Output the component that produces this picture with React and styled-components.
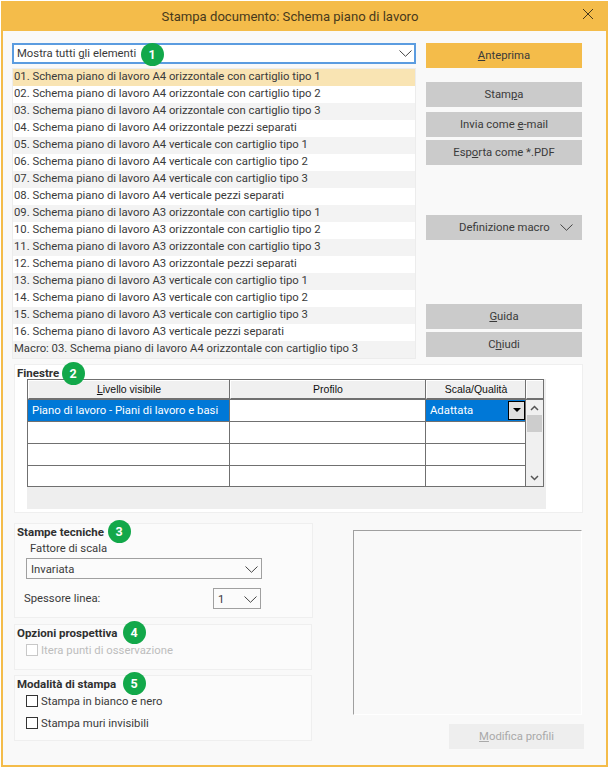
import React from 'react';
import styled, { createGlobalStyle } from 'styled-components';

const GlobalStyle = createGlobalStyle`
  html, body {
    margin: 0;
    padding: 0;
    background: #ffffff;
  }
  * {
    box-sizing: border-box;
  }
`;

const UI_FONT = `Roboto, "Liberation Sans", sans-serif`;

const Win = styled.div`
  position: relative;
  width: 607px;
  height: 766px;
  margin: 1px 0 0 1px;
  border: 2px solid #f4bc4a;
  border-top: 0;
  background: #f9f9f9;
  font-family: ${UI_FONT};
  font-size: 11.3px;
  color: #3a3a3a;
  overflow: hidden;
`;

const TitleBar = styled.div`
  display: flex;
  align-items: center;
  justify-content: center;
  position: relative;
  height: 30px;
  margin: 0 -2px;
  padding-right: 29px;
  background: #f4bc4a;
  font-size: 13.1px;
  color: #47391c;
`;

const CloseButton = styled.svg`
  position: absolute;
  right: 15px;
  top: 8px;
  width: 10px;
  height: 10px;
`;

const Top = styled.div`
  display: flex;
  gap: 10px;
  padding: 12px 0 0 9px;
`;

const LeftCol = styled.div`
  display: flex;
  flex-direction: column;
  width: 404px;
`;

const RightCol = styled.div`
  display: flex;
  flex-direction: column;
  width: 156px;
`;

const Combo = styled.div`
  display: flex;
  align-items: center;
  justify-content: space-between;
  width: ${p => p.$width || '100%'};
  height: 21px;
  margin: ${p => p.$margin || 0};
  padding: ${p => p.$focus ? 0 : '1px'} 3px 0 4px;
  border: ${p => p.$focus ? '1px solid #5b9ce0' : '1px solid #a0a0a0'};
  box-shadow: ${p => p.$focus ? 'inset 0 0 0 1px #5b9ce0' : 'none'};
  background: ${p => p.$focus ? '#ffffff' : 'transparent'};
`;

const Chevron = styled.svg`
  width: 13px;
  height: 7px;
  flex: none;
`;

const List = styled.div`
  margin-top: 4px;
  border: 1px solid #ececec;
  background: #ffffff;
`;

const Row = styled.div`
  height: 17px;
  line-height: 16px;
  padding-left: 1px;
  white-space: nowrap;
  background: ${p => p.$selected ? '#f9e4b3' : p.$odd ? '#f3f3f3' : '#ffffff'};
`;

const Btn = styled.div`
  display: flex;
  align-items: center;
  justify-content: center;
  width: ${p => p.$width || '100%'};
  height: 25px;
  margin-top: ${p => p.$mt || 0}px;
  padding-bottom: 1px;
  background: ${p => p.$primary ? '#f4bc4a' : p.$disabled ? '#eeeeee' : '#cbcbcb'};
  color: ${p => p.$disabled ? '#a9a9a9' : '#3a3a3a'};
`;

const MacroBtn = styled(Btn)`
  justify-content: space-between;
  padding: 0 9px 1px 33px;
`;

const Panel = styled.div`
  margin: ${p => p.$mt || 0}px 0 0 ${p => p.$ml || 0}px;
  width: ${p => p.$width}px;
  height: ${p => p.$height}px;
  border: 1px solid #efefef;
  background: ${p => p.$white ? '#ffffff' : '#fbfbfb'};
`;

const PanelTitle = styled.div`
  height: 14px;
  line-height: 16px;
  padding-left: 2px;
  font-size: 11.5px;
  font-weight: 700;
  color: #303030;
`;

const GridWrap = styled.div`
  width: 519px;
  height: 130px;
  margin-left: 12px;
  background: #eeeeee;
`;

const Grid = styled.div`
  display: grid;
  grid-template-columns: 201px 195px 99px 17px;
  grid-template-rows: 19px 21px 21px 21px 20px;
  gap: 1px;
  width: 517px;
  height: 108px;
  border: 1px solid #707070;
  background: #707070;
  font-family: "Liberation Sans", Arial, sans-serif;
  font-size: 10.5px;
  color: #111111;
`;

const HeadCell = styled.div`
  display: flex;
  align-items: center;
  justify-content: center;
  padding-bottom: 1px;
  background: #f0f0f0;
  border-bottom: 1px solid #707070;
  border-top: 1px solid #ffffff;
  border-left: 1px solid #ffffff;
`;

const Cell = styled.div`
  display: flex;
  align-items: center;
  justify-content: space-between;
  padding: 0 0 0 4px;
  font-family: ${UI_FONT};
  font-size: 11.3px;
  background: ${p => p.$active ? '#0078d7' : '#ffffff'};
  color: ${p => p.$active ? '#ffffff' : '#111111'};
`;

const CellDrop = styled.div`
  display: flex;
  align-items: center;
  justify-content: center;
  width: 17px;
  height: 19px;
  margin: -1px 0 0 0;
  border: 1px solid #000000;
  background: #e1e1e1;
`;

const CellDropArrow = styled.div`
  width: 0;
  height: 0;
  border-left: 4px solid transparent;
  border-right: 4px solid transparent;
  border-top: 4px solid #000000;
`;

const ScrollBar = styled.div`
  grid-column: 4;
  grid-row: 2 / span 4;
  position: relative;
  display: flex;
  flex-direction: column;
  align-items: center;
  justify-content: space-between;
  padding: 5px 0 5px;
  background: #f0f0f0;
`;

const ScrollThumb = styled.div`
  position: absolute;
  top: 15px;
  left: 1px;
  width: 15px;
  height: 17px;
  background: #cdcdcd;
`;

const ScrollIcon = styled.svg`
  width: 9px;
  height: 6px;
`;

const Bottom = styled.div`
  display: flex;
  padding: 10px 0 0 11px;
`;

const BottomLeft = styled.div`
  display: flex;
  flex-direction: column;
  width: 299px;
`;

const BottomRight = styled.div`
  display: flex;
  flex-direction: column;
  align-items: flex-end;
  width: 231px;
  margin-left: 40px;
  padding-top: 7px;
`;

const Preview = styled.div`
  width: 229px;
  height: 185px;
  margin-right: 2px;
  border-top: 1px solid #a0a0a0;
  border-left: 1px solid #a0a0a0;
  border-right: 1px solid #ffffff;
  border-bottom: 1px solid #ffffff;
`;

const FieldLabel = styled.div`
  height: 14px;
  line-height: 14px;
  margin-top: 4px;
  padding-left: ${p => p.$pad}px;
`;

const SpessoreRow = styled.div`
  display: flex;
  align-items: center;
  justify-content: space-between;
  width: 237px;
  margin: 9px 0 0 9px;
`;

const CheckRow = styled.div`
  display: flex;
  align-items: center;
  gap: 3px;
  height: 12px;
  margin: ${p => p.$mt || 0}px 0 0 11px;
  color: ${p => p.$disabled ? '#bdbdbd' : '#3a3a3a'};
`;

const CheckBox = styled.span`
  display: block;
  width: 12px;
  height: 12px;
  border: 1px solid ${p => p.$disabled ? '#c8c8c8' : '#333333'};
  background: #ffffff;
`;

const Badge = styled.div`
  position: absolute;
  left: ${p => p.$x - 14.5}px;
  top: ${p => p.$y - 12.5}px;
  display: flex;
  align-items: center;
  justify-content: center;
  width: 23px;
  height: 23px;
  border-radius: 50%;
  background: #12a84a;
  color: #ffffff;
  font-weight: 700;
  font-size: 12.5px;
`;

const rows = [
  '01. Schema piano di lavoro A4 orizzontale con cartiglio tipo 1',
  '02. Schema piano di lavoro A4 orizzontale con cartiglio tipo 2',
  '03. Schema piano di lavoro A4 orizzontale con cartiglio tipo 3',
  '04. Schema piano di lavoro A4 orizzontale pezzi separati',
  '05. Schema piano di lavoro A4 verticale con cartiglio tipo 1',
  '06. Schema piano di lavoro A4 verticale con cartiglio tipo 2',
  '07. Schema piano di lavoro A4 verticale con cartiglio tipo 3',
  '08. Schema piano di lavoro A4 verticale pezzi separati',
  '09. Schema piano di lavoro A3 orizzontale con cartiglio tipo 1',
  '10. Schema piano di lavoro A3 orizzontale con cartiglio tipo 2',
  '11. Schema piano di lavoro A3 orizzontale con cartiglio tipo 3',
  '12. Schema piano di lavoro A3 orizzontale pezzi separati',
  '13. Schema piano di lavoro A3 verticale con cartiglio tipo 1',
  '14. Schema piano di lavoro A3 verticale con cartiglio tipo 2',
  '15. Schema piano di lavoro A3 verticale con cartiglio tipo 3',
  '16. Schema piano di lavoro A3 verticale pezzi separati',
  'Macro: 03. Schema piano di lavoro A4 orizzontale con cartiglio tipo 3',
];

const badges = [
  [1, 152, 54],
  [2, 73, 373],
  [3, 119, 531],
  [4, 134, 632],
  [5, 134, 683],
];

const ChevronDown = () => (
  <Chevron viewBox="0 0 13 7">
    <polyline points="0.5,0.5 6.5,6.3 12.5,0.5" fill="none" stroke="#444444" strokeWidth="1" />
  </Chevron>
);

export default function App() {
  return (
    <>
      <GlobalStyle />
      <Win>
        <TitleBar>
          Stampa documento: Schema piano di lavoro
          <CloseButton viewBox="0 0 10 10">
            <path d="M0 0 L10 10 M10 0 L0 10" stroke="#47391c" strokeWidth="1" fill="none" />
          </CloseButton>
        </TitleBar>

        <Top>
          <LeftCol>
            <Combo $focus>
              <span>Mostra tutti <u>g</u>li elementi</span>
              <ChevronDown />
            </Combo>
            <List>
              {rows.map((text, i) => (
                <Row key={text} $selected={i === 0} $odd={i % 2 === 0}>{text}</Row>
              ))}
            </List>
          </LeftCol>
          <RightCol>
            <Btn $primary><span><u>A</u>nteprima</span></Btn>
            <Btn $mt={14}><span>Stam<u>p</u>a</span></Btn>
            <Btn $mt={5}><span>Invia come <u>e</u>-mail</span></Btn>
            <Btn $mt={3}><span>Esp<u>o</u>rta come *.PDF</span></Btn>
            <MacroBtn $mt={50}>Definizione macro<ChevronDown /></MacroBtn>
            <Btn $mt={64}><span><u>G</u>uida</span></Btn>
            <Btn $mt={3}><span>C<u>h</u>iudi</span></Btn>
          </RightCol>
        </Top>

        <Panel $mt={5} $ml={11} $width={569} $height={149} $white>
          <PanelTitle>Finestre</PanelTitle>
          <GridWrap>
            <Grid>
              <HeadCell><span><u>L</u>ivello visibile</span></HeadCell>
              <HeadCell>Profilo</HeadCell>
              <HeadCell>Scala/Qualità</HeadCell>
              <HeadCell />
              <Cell $active>Piano di lavoro - Piani di lavoro e basi</Cell>
              <Cell />
              <Cell $active>
                Adattata
                <CellDrop><CellDropArrow /></CellDrop>
              </Cell>
              <ScrollBar>
                <ScrollIcon viewBox="0 0 9 6">
                  <polyline points="1,5 4.5,1.5 8,5" fill="none" stroke="#555555" strokeWidth="1.5" />
                </ScrollIcon>
                <ScrollThumb />
                <ScrollIcon viewBox="0 0 9 6">
                  <polyline points="1,1 4.5,4.5 8,1" fill="none" stroke="#555555" strokeWidth="1.5" />
                </ScrollIcon>
              </ScrollBar>
              <Cell /><Cell /><Cell />
              <Cell /><Cell /><Cell />
              <Cell /><Cell /><Cell />
            </Grid>
          </GridWrap>
        </Panel>

        <Bottom>
          <BottomLeft>
            <Panel $width={299} $height={95}>
              <PanelTitle>Stampe tecniche</PanelTitle>
              <FieldLabel $pad={15}>Fattore di scala</FieldLabel>
              <Combo $width="236px" $margin="2px 0 0 11px">
                <span>Invariata</span>
                <ChevronDown />
              </Combo>
              <SpessoreRow>
                <span>Spessore linea:</span>
                <Combo $width="48px">
                  <span>1</span>
                  <ChevronDown />
                </Combo>
              </SpessoreRow>
            </Panel>
            <Panel $mt={6} $width={298} $height={46}>
              <PanelTitle>Opzioni prospettiva</PanelTitle>
              <CheckRow $disabled $mt={5}>
                <CheckBox $disabled />
                Itera punti di osservazione
              </CheckRow>
            </Panel>
            <Panel $mt={5} $width={298} $height={66}>
              <PanelTitle>Modalità di stampa</PanelTitle>
              <CheckRow $mt={5}>
                <CheckBox />
                Stampa in bianco e nero
              </CheckRow>
              <CheckRow $mt={10}>
                <CheckBox />
                Stampa muri invisibili
              </CheckRow>
            </Panel>
          </BottomLeft>
          <BottomRight>
            <Preview />
            <Btn $disabled $width="135px" $mt={9}><span><u>M</u>odifica profili</span></Btn>
          </BottomRight>
        </Bottom>

        {badges.map(([n, x, y]) => (
          <Badge key={n} $x={x} $y={y}>{n}</Badge>
        ))}
      </Win>
    </>
  );
}
